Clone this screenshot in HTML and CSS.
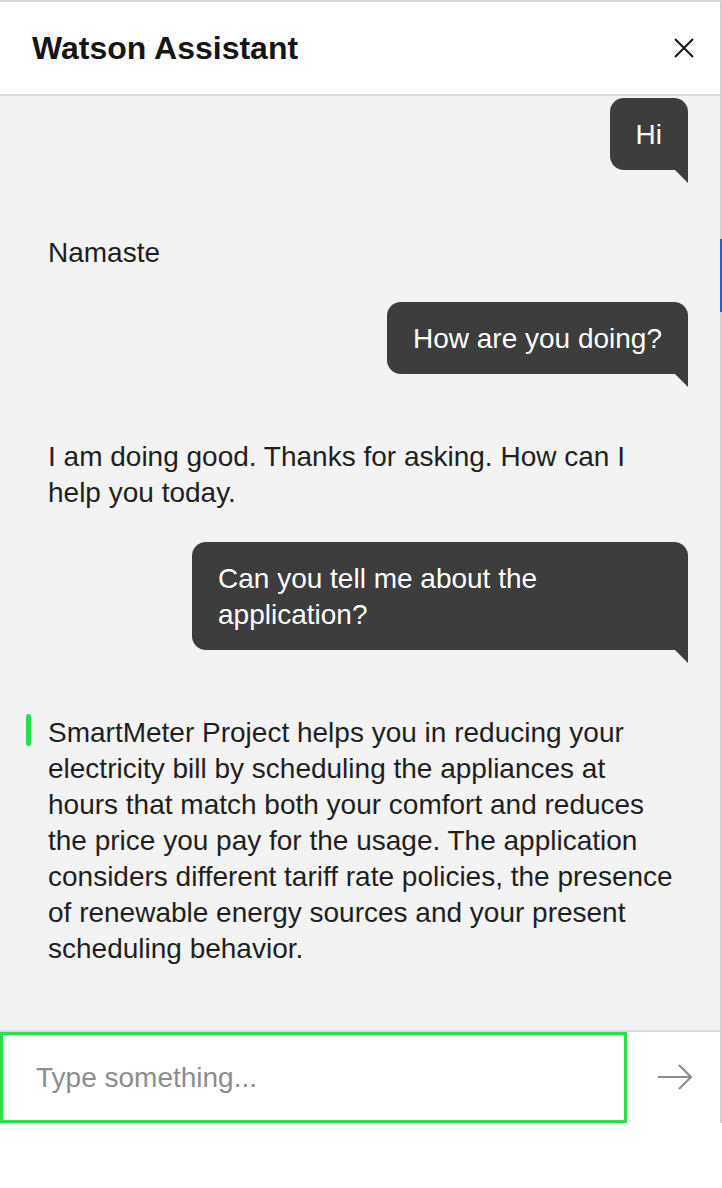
FILE: index.html
```html
<!DOCTYPE html>
<html>
<head>
<meta charset="utf-8">
<link rel="stylesheet" href="styles.css">
</head>
<body>
<div class="panel">
  <header class="header">
    <h1 class="title">Watson Assistant</h1>
    <button class="close" aria-label="Close">
      <svg width="22" height="22" viewBox="0 0 22 22"><path d="M2 2 L20 20 M20 2 L2 20" stroke="#161616" stroke-width="2" fill="none"/></svg>
    </button>
  </header>
  <div class="chat">
    <div class="msg user"><div class="bubble">Hi</div></div>
    <div class="msg bot">Namaste</div>
    <div class="msg user"><div class="bubble">How are you doing?</div></div>
    <div class="msg bot">I am doing good. Thanks for asking. How can I help you today.</div>
    <div class="msg user"><div class="bubble">Can you tell me about the application?</div></div>
    <div class="msg bot latest"><span class="marker"></span>SmartMeter Project helps you in reducing your electricity bill by scheduling the appliances at hours that match both your comfort and reduces the price you pay for the usage. The application considers different tariff rate policies, the presence of renewable energy sources and your present scheduling behavior.</div>
  </div>
  <div class="scroll-thumb"></div>
  <div class="composer">
    <div class="input">Type something...</div>
    <button class="send" aria-label="Send">
      <svg width="36" height="28" viewBox="0 0 36 28"><path d="M1 14 H34 M22 2 L34 14 L22 26" stroke="#8d8d8d" stroke-width="2.2" fill="none"/></svg>
    </button>
  </div>
</div>
</body>
</html>
```
FILE: styles.css
```css
* { box-sizing: border-box; }
html, body { margin: 0; padding: 0; background: #ffffff; }
body { font-family: "Liberation Sans", Arial, sans-serif; }

.panel {
  width: 722px;
  border-top: 2px solid #d4d4d8;
  border-right: 2px solid #d0d0d0;
  box-shadow: 0 6px 10px rgba(0,0,0,0.12);
  position: relative;
}

.header {
  height: 94px;
  background: #ffffff;
  border-bottom: 2px solid #dcdcdc;
  display: flex;
  align-items: center;
  justify-content: space-between;
  padding: 0 24px 0 32px;
}
.title {
  margin: 0;
  font-size: 32px;
  font-weight: bold;
  color: #161616;
}
.close {
  border: 0;
  background: none;
  padding: 0;
  width: 24px;
  height: 24px;
  display: flex;
  align-items: center;
  justify-content: center;
}

.chat {
  height: 934px;
  background: #f3f3f3;
  padding-top: 2px;
  overflow: hidden;
  display: flex;
  flex-direction: column;
}

.msg {
  font-size: 28px;
  line-height: 36px;
  padding-top: 1px;
}
.user {
  display: flex;
  justify-content: flex-end;
  padding-top: 0;
  padding-right: 32px;
  margin-bottom: 64px;
}
.bubble {
  position: relative;
  max-width: 496px;
  background: #3d3d3d;
  color: #ffffff;
  padding: 19px 26px 17px;
  border-radius: 14px 14px 0 14px;
}
.bubble::after {
  content: "";
  position: absolute;
  right: 0;
  bottom: -13px;
  width: 0;
  height: 0;
  border-top: 13px solid #3d3d3d;
  border-left: 13px solid transparent;
}
.bot {
  position: relative;
  color: #1f1f1f;
  padding-left: 48px;
  padding-right: 42px;
  margin-bottom: 31px;
}
.marker {
  position: absolute;
  left: 26px;
  top: 0;
  width: 5px;
  height: 32px;
  border-radius: 3px;
  background: #26e14d;
}
.scroll-thumb {
  position: absolute;
  right: -2px;
  top: 237px;
  width: 2px;
  height: 73px;
  background: #1565e0;
}

.composer {
  display: flex;
  border-top: 2px solid #dcdcdc;
  height: 93px;
  background: #ffffff;
}
.input {
  width: 627px;
  height: 91px;
  border: 3px solid #26e14d;
  padding-left: 33px;
  display: flex;
  align-items: center;
  font-size: 28px;
  color: #8d8d8d;
}
.send {
  flex: 1;
  border: 0;
  background: #ffffff;
  padding: 0 0 2px 2px;
  display: flex;
  align-items: center;
  justify-content: center;
}
```
